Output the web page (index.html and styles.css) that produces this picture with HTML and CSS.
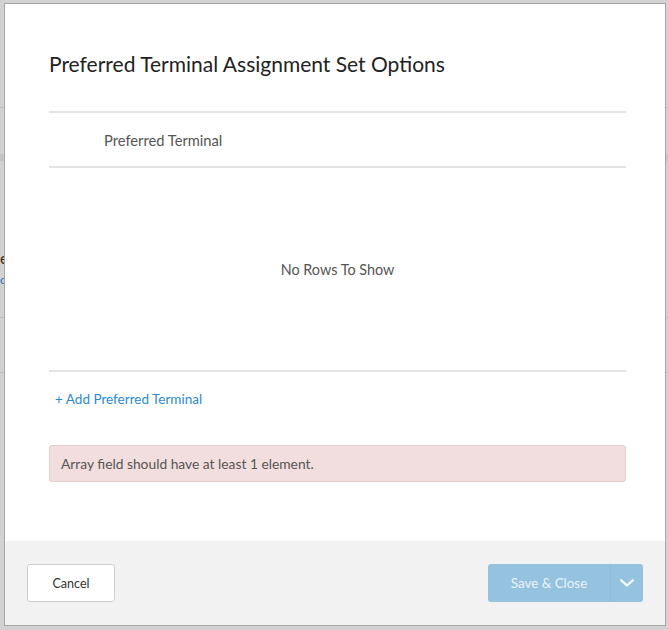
FILE: index.html
```html
<!DOCTYPE html>
<html>
<head>
<meta charset="utf-8">
<link rel="stylesheet" href="styles.css">
</head>
<body>
<div class="page">
  <div class="bg-row r1"></div>
  <div class="bg-row r2"></div>
  <div class="bg-band"></div>
  <div class="bg-row r3">
    <div class="bg-title">example</div>
    <div class="bg-link">options</div>
  </div>
  <div class="bg-row r4"></div>
</div>
<div class="modal">
  <div class="modal-body">
    <h1 class="title">Preferred Terminal Assignment Set Options</h1>
    <div class="grid">
      <div class="grid-header"><span class="col-label">Preferred Terminal</span></div>
      <div class="grid-body">No Rows To Show</div>
    </div>
    <a class="add-link">+ Add Preferred Terminal</a>
    <div class="alert">Array field should have at least 1 element.</div>
  </div>
  <div class="modal-footer">
    <button class="btn-cancel">Cancel</button>
    <div class="split">
      <button class="btn-save">Save &amp; Close</button>
      <button class="btn-caret">
        <svg width="14" height="8" viewBox="0 0 14 8"><path d="M1.2 1.2 L7 6.5 L12.8 1.2" fill="none" stroke="#fff" stroke-width="2.2" stroke-linecap="round" stroke-linejoin="round"/></svg>
      </button>
    </div>
  </div>
</div>
</body>
</html>
```
FILE: styles.css
```css
html, body {
  margin: 0;
  padding: 0;
}
body {
  width: 668px;
  height: 630px;
  overflow: hidden;
  background: #d2d2d2;
  font-family: "Source Sans Pro", Lato, "Liberation Sans", sans-serif;
  position: relative;
}
.page {
  display: flex;
  flex-direction: column;
}
.bg-row {
  border-bottom: 1px solid #bcbcbc;
  box-sizing: border-box;
}
.r1 { height: 108px; }
.r2 { height: 46px; border-bottom: none; }
.bg-band { height: 7px; background: #c3c3c3; }
.r3 {
  height: 157px;
  padding: 86px 0 0 0;
}
.bg-title {
  font-size: 16px;
  line-height: 22px;
  color: #3a2a1a;
}
.bg-link {
  margin-top: 3px;
  font-size: 12px;
  line-height: 16px;
  color: #2a6fb5;
}
.r4 { height: 55px; }

.modal {
  position: absolute;
  left: 4px;
  top: 3px;
  width: 662px;
  height: 623px;
  box-sizing: border-box;
  border: 1px solid #a6a6a6;
  background: #fff;
  display: flex;
  flex-direction: column;
}
.modal-body {
  flex: 1;
  padding: 48px 39px 0 44px;
}
.title {
  margin: 0;
  font-size: 21px;
  line-height: 24px;
  font-weight: 400;
  color: #222;
}
.grid {
  margin-top: 35px;
  border-top: 2px solid #e4e4e4;
  border-bottom: 2px solid #e4e4e4;
}
.grid-header {
  height: 53px;
  border-bottom: 2px solid #e4e4e4;
  display: flex;
  align-items: center;
  padding-left: 55px;
  font-size: 14.7px;
  color: #555;
}
.grid-body {
  height: 202px;
  display: flex;
  align-items: center;
  justify-content: center;
  font-size: 14.4px;
  color: #555;
}
.add-link {
  display: block;
  margin: 17px 0 0 6px;
  font-size: 13.5px;
  line-height: 20px;
  color: #2a8bd0;
}
.alert {
  margin-top: 36px;
  height: 37px;
  box-sizing: border-box;
  border: 1px solid #e6cccc;
  border-radius: 3px;
  background: #f2dede;
  padding: 0 11px;
  display: flex;
  align-items: center;
  font-size: 13.8px;
  color: #555;
}
.modal-footer {
  height: 84px;
  background: #f2f2f2;
  display: flex;
  align-items: center;
  justify-content: space-between;
  padding: 0 22px 0 22px;
}
.btn-cancel {
  width: 88px;
  height: 38px;
  background: #fff;
  border: 1px solid #cfcfcf;
  border-radius: 3px;
  font-family: inherit;
  font-size: 12.6px;
  color: #333;
  padding: 0;
}
.split {
  display: flex;
  height: 38px;
  border-radius: 3px;
  overflow: hidden;
  background: #95c2df;
}
.btn-save {
  width: 123px;
  border: none;
  background: transparent;
  font-family: inherit;
  font-size: 13.4px;
  color: #eaf3f9;
  padding: 0;
  border-right: 1px solid #8dbbd9;
}
.btn-caret {
  width: 32px;
  border: none;
  background: transparent;
  padding: 0;
  display: flex;
  align-items: center;
  justify-content: center;
}
```
